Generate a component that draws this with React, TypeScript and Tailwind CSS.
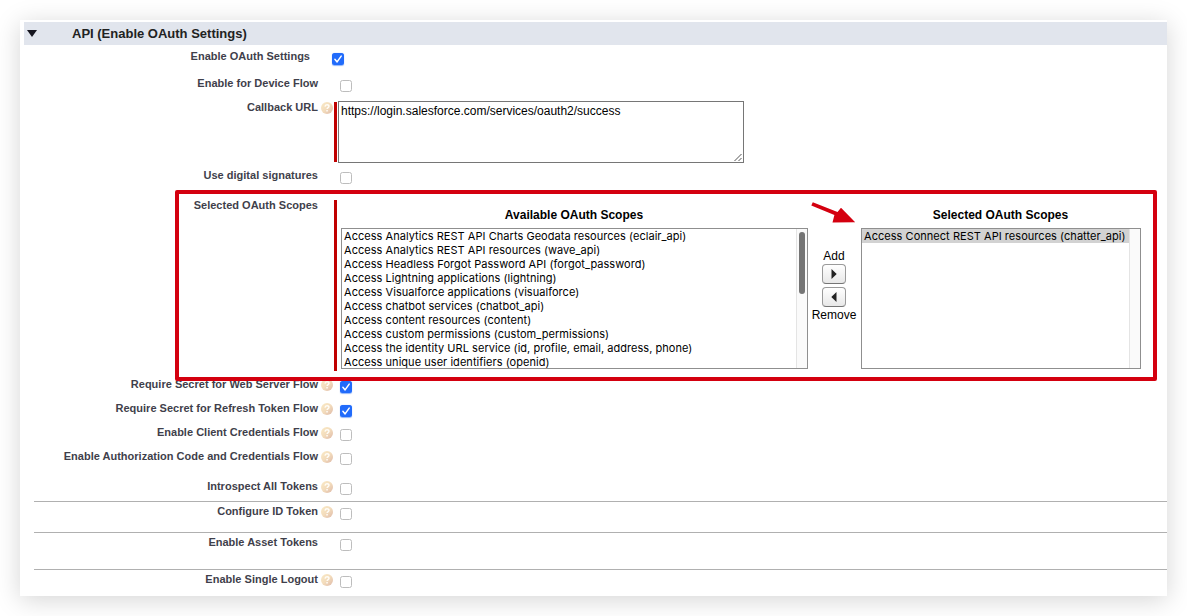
import type { ReactNode } from "react";

const LABEL =
  "flex h-[13px] items-center justify-end whitespace-nowrap text-[11px] leading-[13px] font-bold text-[#3f3f4b] tracking-[0.01px]";

function HelpIcon() {
  return (
    <svg width="12" height="12" viewBox="0 0 12 12" className="block">
      <defs>
        <linearGradient id="help" x1="0" y1="0" x2="1" y2="1">
          <stop offset="0" stopColor="#faeac6" />
          <stop offset="0.5" stopColor="#f3dcbc" />
          <stop offset="1" stopColor="#deb9a8" />
        </linearGradient>
      </defs>
      <circle cx="6" cy="6" r="6" fill="url(#help)" />
      <path d="M4 4.6C4.1 3.3 4.9 2.7 6 2.7C7.2 2.7 8 3.3 8 4.3C8 5.6 6.1 5.6 6.1 7.1" fill="none" stroke="#fffdf8" strokeWidth="1.4" />
      <rect x="5.3" y="8" width="1.5" height="1.5" fill="#fffdf8" />
    </svg>
  );
}

function Checkbox({ checked = false }: { checked?: boolean }) {
  return checked ? (
    <span className="block size-3 rounded-[2.5px] bg-[#216bfb] shadow-[0_0.5px_1px_rgba(31,107,246,0.5)]">
      <svg width="12" height="12" viewBox="0 0 12 12" className="block">
        <path d="M2.9 6.3L5.1 8.9L9.2 3.1" fill="none" stroke="#fff" strokeWidth="1.5" strokeLinecap="round" strokeLinejoin="round" />
      </svg>
    </span>
  ) : (
    <span className="block size-3 rounded-[2.5px] border border-[#bdbdbd] bg-white" />
  );
}

type RowProps = {
  label: string;
  help?: boolean;
  className: string;
  children: ReactNode;
};

function Row({ label, help = false, className, children }: RowProps) {
  return (
    <div className={`flex items-start ${className}`}>
      <div className={`w-[284px] ${LABEL}`}>{label}</div>
      <div className="flex w-4 shrink-0 justify-end pt-[1px] pr-[1px]">{help && <HelpIcon />}</div>
      {children}
    </div>
  );
}

type CheckRowProps = { label: string; help?: boolean; checked?: boolean; className: string };

function CheckRow({ label, help, checked, className }: CheckRowProps) {
  return (
    <Row label={label} help={help} className={className}>
      <div className="ml-1.5 pt-[3px]">
        <Checkbox checked={checked} />
      </div>
    </Row>
  );
}

const AVAILABLE = [
  "Access Analytics REST API Charts Geodata resources (eclair_api)",
  "Access Analytics REST API resources (wave_api)",
  "Access Headless Forgot Password API (forgot_password)",
  "Access Lightning applications (lightning)",
  "Access Visualforce applications (visualforce)",
  "Access chatbot services (chatbot_api)",
  "Access content resources (content)",
  "Access custom permissions (custom_permissions)",
  "Access the identity URL service (id, profile, email, address, phone)",
  "Access unique user identifiers (openid)",
];

function ScopeList({ title, items, selected, scrollable, className }: {
  title: string;
  items: string[];
  selected?: string;
  scrollable?: boolean;
  className: string;
}) {
  return (
    <div className={className}>
      <div className="flex h-7 items-center justify-center pt-0.5 pr-[1px] text-[12px] font-bold text-black">{title}</div>
      <div className="flex h-[141px] border border-[#8f8f8f] bg-white">
        <ul className="min-w-0 flex-1 overflow-hidden font-['Inter',sans-serif] text-[11px] leading-[14px] tracking-[0.04px] text-black">
          {items.map((item) => (
            <li key={item} className={`h-[14px] pl-0.5 whitespace-nowrap ${item === selected ? "bg-[#d2d2d2]" : ""}`}>
              {item}
            </li>
          ))}
        </ul>
        <div className="flex w-[11px] justify-center border-l border-[#e4e4e4] bg-[#fafafa] pt-[3px]">
          {scrollable && <div className="h-[62px] w-1.5 rounded-full bg-[#757575]" />}
        </div>
      </div>
    </div>
  );
}

function ArrowButton({ direction }: { direction: "left" | "right" }) {
  return (
    <button className="flex h-5 w-6 items-center justify-center rounded-[4px] border border-[#9a9a9a] border-b-[#757575] bg-linear-to-b from-white to-[#e8e8e8]">
      <svg width="6" height="10" viewBox="0 0 6 10">
        <path d={direction === "right" ? "M0.5 0V10L5.7 5Z" : "M5.5 0V10L0.3 5Z"} fill="#222" />
      </svg>
    </button>
  );
}

export default function App() {
  return (
    <div className="h-[616px] w-[1187px] overflow-hidden bg-white p-5 font-['Liberation_Sans',Arial,sans-serif]">
      <main className="relative h-[576px] w-[1147px] bg-white pt-0.5 shadow-[0_4px_24px_rgba(0,0,0,0.17)]">
        <header className="ml-1 flex h-[23px] items-center bg-[#e1e5ed]">
          <svg width="10" height="7" viewBox="0 0 10 7" className="ml-[3px] block">
            <path d="M0 0H10L5 7Z" fill="#15151f" />
          </svg>
          <h1 className="ml-[35px] text-[13px] leading-[15px] font-bold text-[#222]">API (Enable OAuth Settings)</h1>
        </header>

        <div className="pl-3.5">
          <div className="flex h-8 items-start pt-[5px]">
            <div className={`w-[276px] ${LABEL}`}>Enable OAuth Settings</div>
            <div className="ml-[22px] pt-[3px]">
              <Checkbox checked />
            </div>
          </div>
          <CheckRow label="Enable for Device Flow" className="h-6" />

          <Row label="Callback URL" help className="h-[68px]">
            <div className="mt-[1px] h-[60px] w-[3px] bg-[#c00000]" />
            <div className="ml-[1px] flex h-[62px] w-[406px] justify-between border border-[#767676] bg-white pt-[3px] pl-0.5 text-[12px] leading-[13px] text-black">
              <span>https://login.salesforce.com/services/oauth2/success</span>
              <svg width="9" height="9" viewBox="0 0 9 9" className="self-end">
                <path d="M0.5 8L7.5 1M4.5 8L7.5 5" stroke="#555" strokeWidth="1" />
              </svg>
            </div>
          </Row>

          <CheckRow label="Use digital signatures" className="h-[30px]" />

          <Row label="Selected OAuth Scopes" className="h-[179px]">
            <div className="mt-[1px] h-[171px] w-[3px] bg-[#c00000]" />
            <div className="ml-1 flex pt-[1px]">
              <ScopeList title="Available OAuth Scopes" items={AVAILABLE} scrollable className="w-[467px]" />
              <div className="flex w-[53px] flex-col items-center pt-[49px] pr-[1px] text-[12px] leading-[14px] text-black">
                <span>Add</span>
                <span className="mt-[1px]"><ArrowButton direction="right" /></span>
                <span className="mt-[3px]"><ArrowButton direction="left" /></span>
                <span className="mt-[1px]">Remove</span>
              </div>
              <ScopeList
                title="Selected OAuth Scopes"
                items={["Access Connect REST API resources (chatter_api)"]}
                selected="Access Connect REST API resources (chatter_api)"
                className="w-[280px]"
              />
            </div>
          </Row>

          <CheckRow label="Require Secret for Web Server Flow" help checked className="h-6" />
          <CheckRow label="Require Secret for Refresh Token Flow" help checked className="h-6" />
          <CheckRow label="Enable Client Credentials Flow" help className="h-6" />
          <CheckRow label="Enable Authorization Code and Credentials Flow" help className="h-[30px]" />
          <CheckRow label="Introspect All Tokens" help className="h-[22px] border-b border-[#b0b0b0]" />
          <CheckRow label="Configure ID Token" help className="h-[31px] border-b border-[#b0b0b0] pt-[3px]" />
          <CheckRow label="Enable Asset Tokens" className="h-[37px] border-b border-[#b0b0b0] pt-[3px]" />
          <CheckRow label="Enable Single Logout" help className="h-[26px] pt-[3px]" />
        </div>

        <div className="pointer-events-none absolute top-[170px] left-[155px] h-[191px] w-[982px] rounded-[2px] border-4 border-[#d4000f]" />
        <svg className="pointer-events-none absolute top-[180px] left-[790px]" width="48" height="26" viewBox="0 0 48 26">
          <path d="M2.8 2.2L1.3 5.6L24.4 14.9L22.5 22.5L45.2 22.2L31 7.8L27.5 12Z" fill="#d4000f" />
        </svg>
      </main>
    </div>
  );
}
